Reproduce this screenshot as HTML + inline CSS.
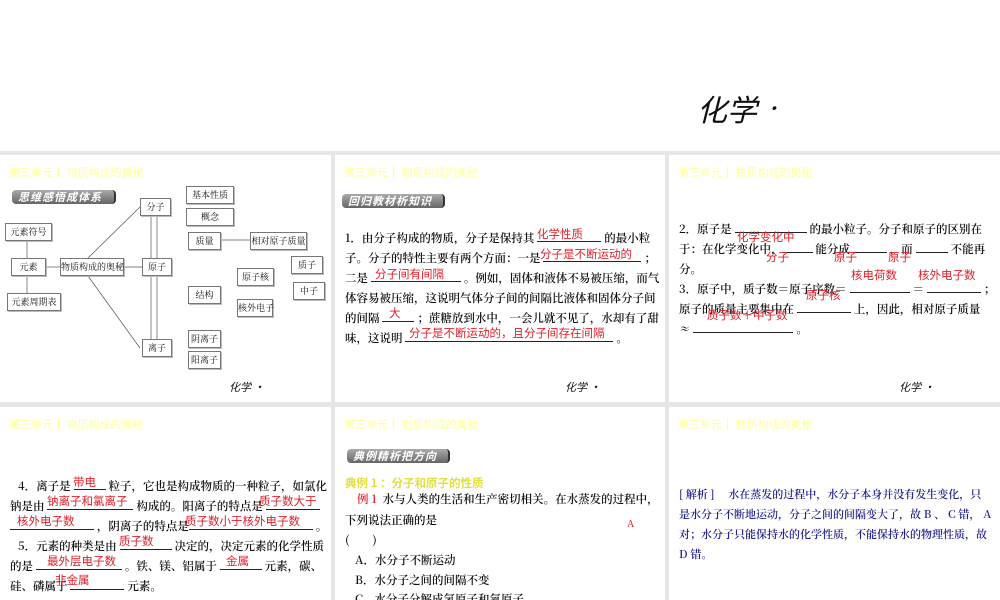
<!DOCTYPE html>
<html><head><meta charset="utf-8"><style>
*{margin:0;padding:0;box-sizing:border-box}
body{width:1000px;height:600px;overflow:hidden;background:#e6e6e6;position:relative;font-family:"Liberation Serif","Noto Serif CJK SC","Noto Sans CJK SC",serif;color:#111}
.top{position:absolute;left:0;top:0;width:1000px;height:151px;background:#fff}
.p{position:absolute;background:#fff;overflow:hidden}
.t{position:absolute;left:9px;top:9px;font-size:11px;color:#ffff99;font-family:"Noto Sans CJK SC",sans-serif;white-space:nowrap}
.badge{position:absolute;height:14px;border-radius:4px;background:linear-gradient(#aaa,#666);border-right:2px solid #333;color:#fff;font-size:11px;line-height:14px;padding:0 6px;font-style:italic;font-weight:bold;letter-spacing:1px;font-family:"Noto Sans CJK SC",sans-serif;white-space:nowrap}
.b{position:absolute;border:1px solid #777;font-size:9px;line-height:16px;text-align:center;background:#fff;white-space:nowrap;font-family:"Noto Serif CJK SC",serif;box-shadow:1px 1px 0 #bbb}
.ft{position:absolute;font-size:11px;font-style:italic;font-family:"Noto Sans CJK SC",sans-serif;white-space:nowrap}
.l{position:absolute;left:10px;font-size:11.5px;white-space:nowrap;font-family:"Noto Serif CJK SC",serif;font-weight:600}
.r{position:absolute;color:#e0202a;font-size:11.5px;white-space:nowrap;font-family:"Noto Sans CJK SC",sans-serif}
u{text-decoration:none;border-bottom:1px solid #222;display:inline-block;height:12px;vertical-align:baseline}
.bl{color:#202090}
.bl .l{font-size:11px}
</style></head><body>
<div class="top"></div>
<div style="position:absolute;left:697px;top:86px;font-size:30px;font-style:italic;font-family:'Noto Sans CJK SC',sans-serif;color:#111">化学 <span style="font-size:18px;vertical-align:6px">·</span></div>

<!-- panel 1 -->
<div class="p" style="left:0;top:155px;width:331px;height:247px">
<div class="t">第三单元┃ 物质构成的奥秘</div>
<div class="badge" style="left:12px;top:35px;width:104px">思维感悟成体系</div>
<svg style="position:absolute;left:0;top:0" width="331" height="247" stroke="#555" stroke-width="0.7" fill="none">
<line x1="88" y1="103" x2="140" y2="52"/><line x1="124" y1="112" x2="142" y2="112"/>
<line x1="88" y1="121" x2="140" y2="193"/><line x1="60" y1="112" x2="46" y2="112"/>
<line x1="27" y1="103" x2="27" y2="87"/><line x1="27" y1="122" x2="27" y2="138"/>
<line x1="151" y1="61" x2="151" y2="103"/><line x1="157" y1="61" x2="157" y2="103"/>
<line x1="151" y1="122" x2="151" y2="184"/><line x1="157" y1="122" x2="157" y2="184"/>
<line x1="221" y1="85" x2="250" y2="85"/>
</svg>
<div class="b" style="left:140px;top:43px;width:31px">分子</div>
<div class="b" style="left:142px;top:103px;width:30px">原子</div>
<div class="b" style="left:142px;top:184px;width:30px">离子</div>
<div class="b" style="left:60px;top:103px;width:64px">物质构成的奥秘</div>
<div class="b" style="left:11px;top:103px;width:35px">元素</div>
<div class="b" style="left:5px;top:68px;width:47px">元素符号</div>
<div class="b" style="left:7px;top:138px;width:54px">元素周期表</div>
<div class="b" style="left:186px;top:31px;width:48px">基本性质</div>
<div class="b" style="left:186px;top:53px;width:48px">概念</div>
<div class="b" style="left:188px;top:77px;width:33px">质量</div>
<div class="b" style="left:250px;top:77px;width:57px">相对原子质量</div>
<div class="b" style="left:291px;top:101px;width:32px">质子</div>
<div class="b" style="left:293px;top:127px;width:32px">中子</div>
<div class="b" style="left:237px;top:113px;width:37px">原子核</div>
<div class="b" style="left:237px;top:144px;width:36px">核外电子</div>
<div class="b" style="left:188px;top:131px;width:33px">结构</div>
<div class="b" style="left:188px;top:175px;width:33px">阴离子</div>
<div class="b" style="left:188px;top:196px;width:33px">阳离子</div>
<div class="ft" style="left:229px;top:224px">化学 ·</div>
</div>

<!-- panel 2 -->
<div class="p" style="left:335px;top:155px;width:330px;height:247px">
<div class="t">第三单元┃ 物质构成的奥秘</div>
<div class="badge" style="left:7px;top:39px;width:103px">回归教材析知识</div>
<div class="l" style="top:75px">1．由分子构成的物质，分子是保持其 <u style="width:64px"></u> 的最小粒</div>
<div class="r" style="left:202px;top:71px">化学性质</div>
<div class="l" style="top:95px">子。分子的特性主要有两个方面：一是 <u style="width:98px"></u> ；</div>
<div class="r" style="left:205px;top:91px">分子是不断运动的</div>
<div class="l" style="top:115px">二是 <u style="width:90px"></u> 。例如，固体和液体不易被压缩，而气</div>
<div class="r" style="left:40px;top:111px">分子间有间隔</div>
<div class="l" style="top:135px">体容易被压缩，这说明气体分子间的间隔比液体和固体分子间</div>
<div class="l" style="top:155px">的间隔 <u style="width:32px"></u> ；蔗糖放到水中，一会儿就不见了，水却有了甜</div>
<div class="r" style="left:54px;top:150px">大</div>
<div class="l" style="top:175px">味，这说明 <u style="width:208px"></u> 。</div>
<div class="r" style="left:74px;top:170px">分子是不断运动的，且分子间存在间隔</div>
<div class="ft" style="left:230px;top:224px">化学 ·</div>
</div>

<!-- panel 3 -->
<div class="p" style="left:669px;top:155px;width:331px;height:247px">
<div class="t">第三单元┃ 物质构成的奥秘</div>
<div class="l" style="top:66px">2．原子是 <u style="width:72px"></u> 的最小粒子。分子和原子的区别在</div>
<div class="r" style="left:68px;top:74px">化学变化中</div>
<div class="l" style="top:86px">于：在化学变化中，<u style="width:30px"></u> 能分成 <u style="width:34px"></u> ，而 <u style="width:32px"></u> 不能再</div>
<div class="r" style="left:97px;top:94px">分子</div><div class="r" style="left:165px;top:94px">原子</div><div class="r" style="left:219px;top:94px">原子</div>
<div class="l" style="top:106px">分。</div>
<div class="r" style="left:182px;top:112px">核电荷数</div><div class="r" style="left:249px;top:112px">核外电子数</div>
<div class="l" style="top:126px">3．原子中，质子数＝原子序数＝ <u style="width:60px"></u> ＝ <u style="width:54px"></u> ；</div>
<div class="r" style="left:137px;top:132px">原子核</div>
<div class="l" style="top:146px">原子的质量主要集中在 <u style="width:54px"></u> 上，因此，相对原子质量</div>
<div class="r" style="left:38px;top:152px">质子数＋中子数</div>
<div class="l" style="top:166px">≈ <u style="width:100px"></u> 。</div>
<div class="ft" style="left:230px;top:224px">化学 ·</div>
</div>

<!-- panel 4 -->
<div class="p" style="left:0;top:407px;width:331px;height:193px">
<div class="t">第三单元┃ 物质构成的奥秘</div>
<div class="l" style="top:71px;left:18px">4．离子是 <u style="width:32px"></u> 粒子，它也是构成物质的一种粒子，如氯化</div>
<div class="r" style="left:73px;top:67px">带电</div>
<div class="l" style="top:91px">钠是由 <u style="width:86px"></u> 构成的。阳离子的特点是 <u style="width:54px"></u></div>
<div class="r" style="left:47px;top:86px">钠离子和氯离子</div><div class="r" style="left:259px;top:86px">质子数大于</div>
<div class="l" style="top:111px"><u style="width:84px"></u> ，阴离子的特点是<u style="width:124px"></u> 。</div>
<div class="r" style="left:17px;top:106px">核外电子数</div><div class="r" style="left:185px;top:106px">质子数小于核外电子数</div>
<div class="l" style="top:131px;left:18px">5．元素的种类是由 <u style="width:52px"></u> 决定的，决定元素的化学性质</div>
<div class="r" style="left:119px;top:126px">质子数</div>
<div class="l" style="top:151px">的是 <u style="width:86px"></u> 。铁、镁、铝属于 <u style="width:42px"></u> 元素，碳、</div>
<div class="r" style="left:47px;top:146px">最外层电子数</div><div class="r" style="left:226px;top:146px">金属</div>
<div class="l" style="top:171px">硅、磷属于 <u style="width:54px"></u> 元素。</div>
<div class="r" style="left:55px;top:165px">非金属</div>
</div>

<!-- panel 5 -->
<div class="p" style="left:335px;top:407px;width:330px;height:193px">
<div class="t">第三单元┃ 物质构成的奥秘</div>
<div class="badge" style="left:12px;top:42px;width:103px">典例精析把方向</div>
<div class="l" style="top:68px;color:#e0e040;font-family:'Noto Sans CJK SC',sans-serif">典例 1 ：分子和原子的性质</div>
<div class="l" style="top:84px;left:22px"><span style="color:#e0202a">例 1</span>&nbsp; 水与人类的生活和生产密切相关。在水蒸发的过程中，</div>
<div class="l" style="top:105px">下列说法正确的是</div>
<div class="r" style="left:292px;top:112px;font-size:10px;font-family:'Liberation Serif',serif">A</div>
<div class="l" style="top:125px">(　　)</div>
<div class="l" style="top:145px;left:20px">A．水分子不断运动</div>
<div class="l" style="top:165px;left:20px">B．水分子之间的间隔不变</div>
<div class="l" style="top:184px;left:20px">C．水分子分解成氢原子和氧原子</div>
</div>

<!-- panel 6 -->
<div class="p bl" style="left:669px;top:407px;width:331px;height:193px">
<div class="t">第三单元┃ 物质构成的奥秘</div>
<div class="l" style="top:79px">[ 解析 ]　 水在蒸发的过程中，水分子本身并没有发生变化，只</div>
<div class="l" style="top:99px">是水分子不断地运动，分子之间的间隔变大了，故 B 、 C 错， A</div>
<div class="l" style="top:119px">对；水分子只能保持水的化学性质，不能保持水的物理性质，故</div>
<div class="l" style="top:139px">D 错。</div>
</div>
</body></html>
